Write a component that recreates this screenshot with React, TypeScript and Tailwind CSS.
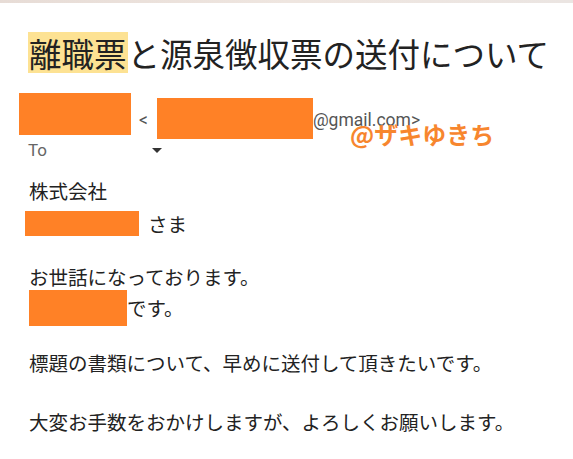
const jp = "font-['Noto_Sans_CJK_JP','Noto_Sans',sans-serif]"
const latin = "font-['Roboto','Liberation_Sans',Arial,sans-serif]"

function Redact({ className }: { className: string }) {
  return <div className={`bg-[#ff8126] shrink-0 ${className}`} />
}

export default function App() {
  return (
    <div className={`relative w-[573px] h-[459px] overflow-hidden bg-white text-[#222] ${jp}`}>
      {/* strip of the picture above */}
      <div className="h-[3px] bg-gradient-to-r from-[#e7dcd6] via-[#efe6e0] to-[#ebe5e2]" />

      {/* subject */}
      <h1 className="mt-[29px] ml-[28px] h-[41px] flex items-center text-[32.5px] font-normal whitespace-nowrap">
        <span className="h-[41px] leading-[41px] bg-[#fde293] px-[1px]">離職票</span>
        <span className="leading-[41px]">と源泉徴収票の送付について</span>
      </h1>

      {/* sender */}
      <div className="mt-[20px] flex items-start">
        <Redact className="ml-[19px] w-[112px] h-[42px]" />
        <span className={`ml-[8px] mt-[17px] leading-[20px] text-[17.5px] text-[#555] ${latin}`}>&lt;</span>
        <Redact className="ml-[9px] mt-[5px] w-[156px] h-[41px]" />
        <span className={`mt-[17px] leading-[20px] text-[17.5px] text-[#555] ${latin}`}>@gmail.com&gt;</span>
      </div>

      <div className="flex items-center h-[18px] mt-[2px]">
        <span className={`ml-[28px] text-[17px] leading-[18px] text-[#666] ${latin}`}>To</span>
        <div className="ml-[105px] mt-[1px] w-0 h-0 border-x-[5.5px] border-x-transparent border-t-[5px] border-t-[#333]" />
      </div>

      <div className="absolute left-[350px] top-[117px] text-[24px] leading-[34px] font-bold text-[#f7862e] whitespace-nowrap">
        @ザキゆきち
      </div>

      {/* body */}
      <div className="ml-[29px] text-[19.5px] leading-[31px] whitespace-nowrap">
        <div className="mt-[16px]">株式会社</div>
        <div className="mt-[2px] h-[31px] flex items-center">
          <Redact className="-ml-[4px] w-[114px] h-[25px]" />
          <span className="ml-[9px]">さま</span>
        </div>
        <div className="mt-[22px]">お世話になっております。</div>
        <div className="h-[31px] flex items-center">
          <Redact className="w-[98px] h-[36px]" />
          <span>です。</span>
        </div>
        <div className="mt-[24px]">標題の書類について、早めに送付して頂きたいです。</div>
        <div className="mt-[28px]">大変お手数をおかけしますが、よろしくお願いします。</div>
      </div>
    </div>
  )
}
